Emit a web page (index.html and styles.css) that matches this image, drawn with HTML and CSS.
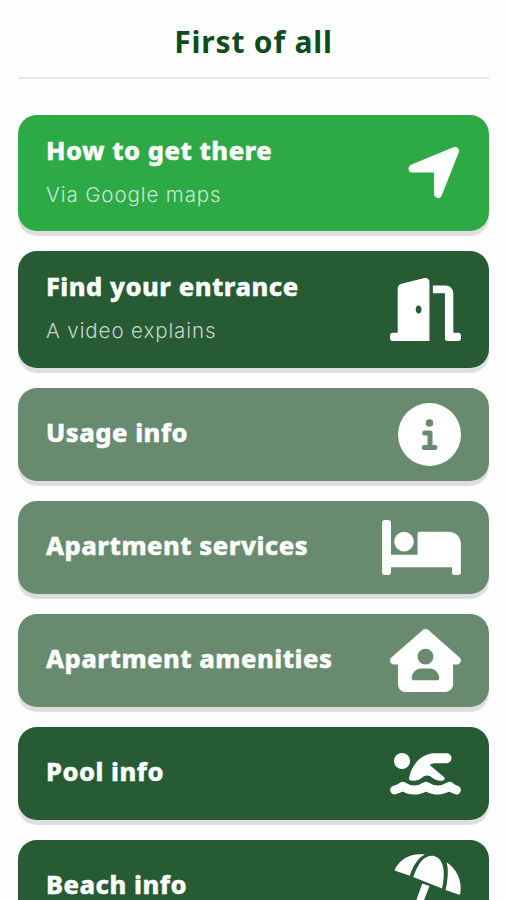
FILE: index.html
```html
<!DOCTYPE html>
<html lang="en">
<head>
    <meta charset="UTF-8">
    <meta name="viewport" content="width=device-width, initial-scale=1.0">
    <title>First of all</title>
    <link rel="stylesheet" href="styles.css">
</head>
<body>
    <h1>First of all</h1>

    <div class="menu">
        <div class="card bright tall">
            <div class="card-text">
                <h2>How to get there</h2>
                <p>Via Google maps</p>
            </div>
            <svg class="icon" width="53" height="53" viewBox="0 0 53 53">
                <path d="M4.500 22.500L47 5 30 48V22.500Z" stroke="#fff" stroke-width="8" stroke-linejoin="round"/>
            </svg>
        </div>

        <div class="card dark tall">
            <div class="card-text">
                <h2>Find your entrance</h2>
                <p>A video explains</p>
            </div>
            <svg class="icon" width="71" height="63" viewBox="0 0 576 512">
                <path d="M320 32c0-9.900-4.500-19.200-12.300-25.200S289.800-1.400 280.200 1l-188 45C73 51.300 62 66 62 84V444H20c-12 0-20 8-20 20v28c0 12 8 20 20 20H320V32zM256 256c0 17.700-10.700 32-24 32s-24-14.300-24-32s10.700-32 24-32s24 14.300 24 32zm92-132h98V492c0 12 8 20 20 20h90c12 0 20-8 20-20v-28c0-12-8-20-20-20H514V124c0-36-28-64-64-64H348v64z"/>
            </svg>
        </div>

        <div class="card sage">
            <h2>Usage info</h2>
            <svg class="icon" width="63" height="63" viewBox="0 0 63 63">
                <circle cx="31.500" cy="31.500" r="31.500"/>
                <circle class="cut" cx="31.500" cy="20" r="3.800"/>
                <path class="cut-line" d="M26.700 30h5.300v14.500M26.300 44.500h10.600"/>
            </svg>
        </div>

        <div class="card sage">
            <h2>Apartment services</h2>
            <svg class="icon" width="79" height="63" viewBox="0 0 640 512">
                <path d="M20 32h32c11 0 20 9 20 20V314H288V144c0-8.800 7.200-16 16-16H544c53 0 96 43 96 96V460c0 11-9 20-20 20h-32c-11 0-20-9-20-20V416H72v44c0 11-9 20-20 20H20c-11 0-20-9-20-20V52C0 41 9 32 20 32zm158 96a80 80 0 1 1 0 160 80 80 0 1 1 0-160z"/>
            </svg>
        </div>

        <div class="card sage">
            <h2>Apartment amenities</h2>
            <svg class="icon" width="71" height="63" viewBox="0 0 576 512">
                <path d="M575.800 255.500c0 18-15 32.100-32 32.100h-32l.7 160.200c.2 35.500-28.500 64.300-64 64.300H128.100c-35.300 0-64-28.700-64-64V287.600H32c-18 0-32-14-32-32.100c0-9 3-17 10-24L266.400 8c7-7 15-8 22-8s15 2 21 7L564.800 231.500c8 7 12 15 11 24zM352 224a64 64 0 1 0-128 0 64 64 0 1 0 128 0zm-100 96c-42 0-76 36-76 82c0 8 6 14 14 14H386c8 0 14-6 14-14c0-46-34-82-76-82H252z"/>
            </svg>
        </div>

        <div class="card dark">
            <h2>Pool info</h2>
            <svg class="icon" width="71" height="63" viewBox="0 0 71 63">
                <circle cx="12" cy="19" r="8"/>
                <path d="M19 36C22 22 31 12 44 11.200H56.500A4.900 4.900 0 0 1 56.500 21.200H45Q41.500 21.200 39.700 23L54.500 35.500Q55.500 38.500 51.500 38.800C44 39.300 42 33.500 37 33.500 32 33.500 31 39 23 38.800Q18.500 38.800 19 36Z"/>
                <path class="wave" d="M4.600 48Q9.500 46.800 12.700 44.300Q24 51.700 36 44.300Q48 51.700 59.500 44.300Q62 46.800 66.400 48"/>
            </svg>
        </div>

        <div class="card dark">
            <h2>Beach info</h2>
            <svg class="icon" width="67" height="64" viewBox="0 0 67 64">
                <path d="M.8 15.300C7 3.500 18.500-1.500 31 .6 24 4 19 12 15.800 21.800L1.200 16.800Q.3 16.300.8 15.300Z"/>
                <path d="M19.200 23C24 9 30 1.500 38.500 1.700 48 3 52.500 14 48 34.500Z"/>
                <path d="M52.500 8.200C62 14 68.500 26 66.300 39.500Q66 41 64.500 40.500L51.500 36C54 26 54.700 15 52.500 8.200Z"/>
                <path d="M28.300 29.500L35.500 32 25.500 58H50q3 0 3 3t-3 3H4q-3 0-3-3t3-3H18Z"/>
            </svg>
        </div>
    </div>
</body>
</html>
```

FILE: styles.css
```css
body {
    margin: 0;
    padding: 0 17px 0 18px;
    height: 900px;
    box-sizing: border-box;
    overflow: hidden;
    background-color: #fefefe;
    font-family: "Noto Sans", sans-serif;
}
h1 {
    margin: 0;
    height: 79px;
    box-sizing: border-box;
    border-bottom: 2px solid #e5e5e5;
    text-align: center;
    color: #0f4c1c;
    font-size: 30px;
    line-height: 84px;
    letter-spacing: 0.8px;
}
h2 {
    margin: 0 0 5px;
    font-size: 25.5px;
    font-weight: 800;
    line-height: 36px;
    letter-spacing: 0.5px;
    white-space: nowrap;
    -webkit-text-stroke: 0.4px #fff;
}
p {
    margin: 0;
    font-family: Inter, sans-serif;
    font-size: 20.5px;
    font-weight: 300;
    line-height: 30px;
    letter-spacing: 0.9px;
    color: rgba(255, 255, 255, 0.75);
    white-space: nowrap;
}
.menu {
    display: flex;
    flex-direction: column;
    gap: 20px;
    padding-top: 35.5px;
}
.card {
    display: flex;
    align-items: center;
    justify-content: space-between;
    flex-shrink: 0;
    height: 93px;
    box-sizing: border-box;
    padding: 0 28px;
    border-radius: 19px;
    color: #fff;
    box-shadow: 0 5px 1px #dedede;
}
.card.tall {
    height: 116.5px;
}
.card-text {
    padding-bottom: 4px;
}
.card-text h2 {
    margin-bottom: 12px;
}
.bright {
    background-color: #2da946;
}
.dark {
    background-color: #275b33;
}
.sage {
    background-color: #688b6f;
}
.icon {
    fill: #fff;
    overflow: visible;
}
.cut {
    fill: #688b6f;
}
.cut-line {
    fill: none;
    stroke: #688b6f;
    stroke-width: 5;
    stroke-linecap: round;
    stroke-linejoin: round;
}
.wave {
    fill: none;
    stroke: #fff;
    stroke-width: 9;
    stroke-linecap: round;
    stroke-linejoin: round;
}
```
